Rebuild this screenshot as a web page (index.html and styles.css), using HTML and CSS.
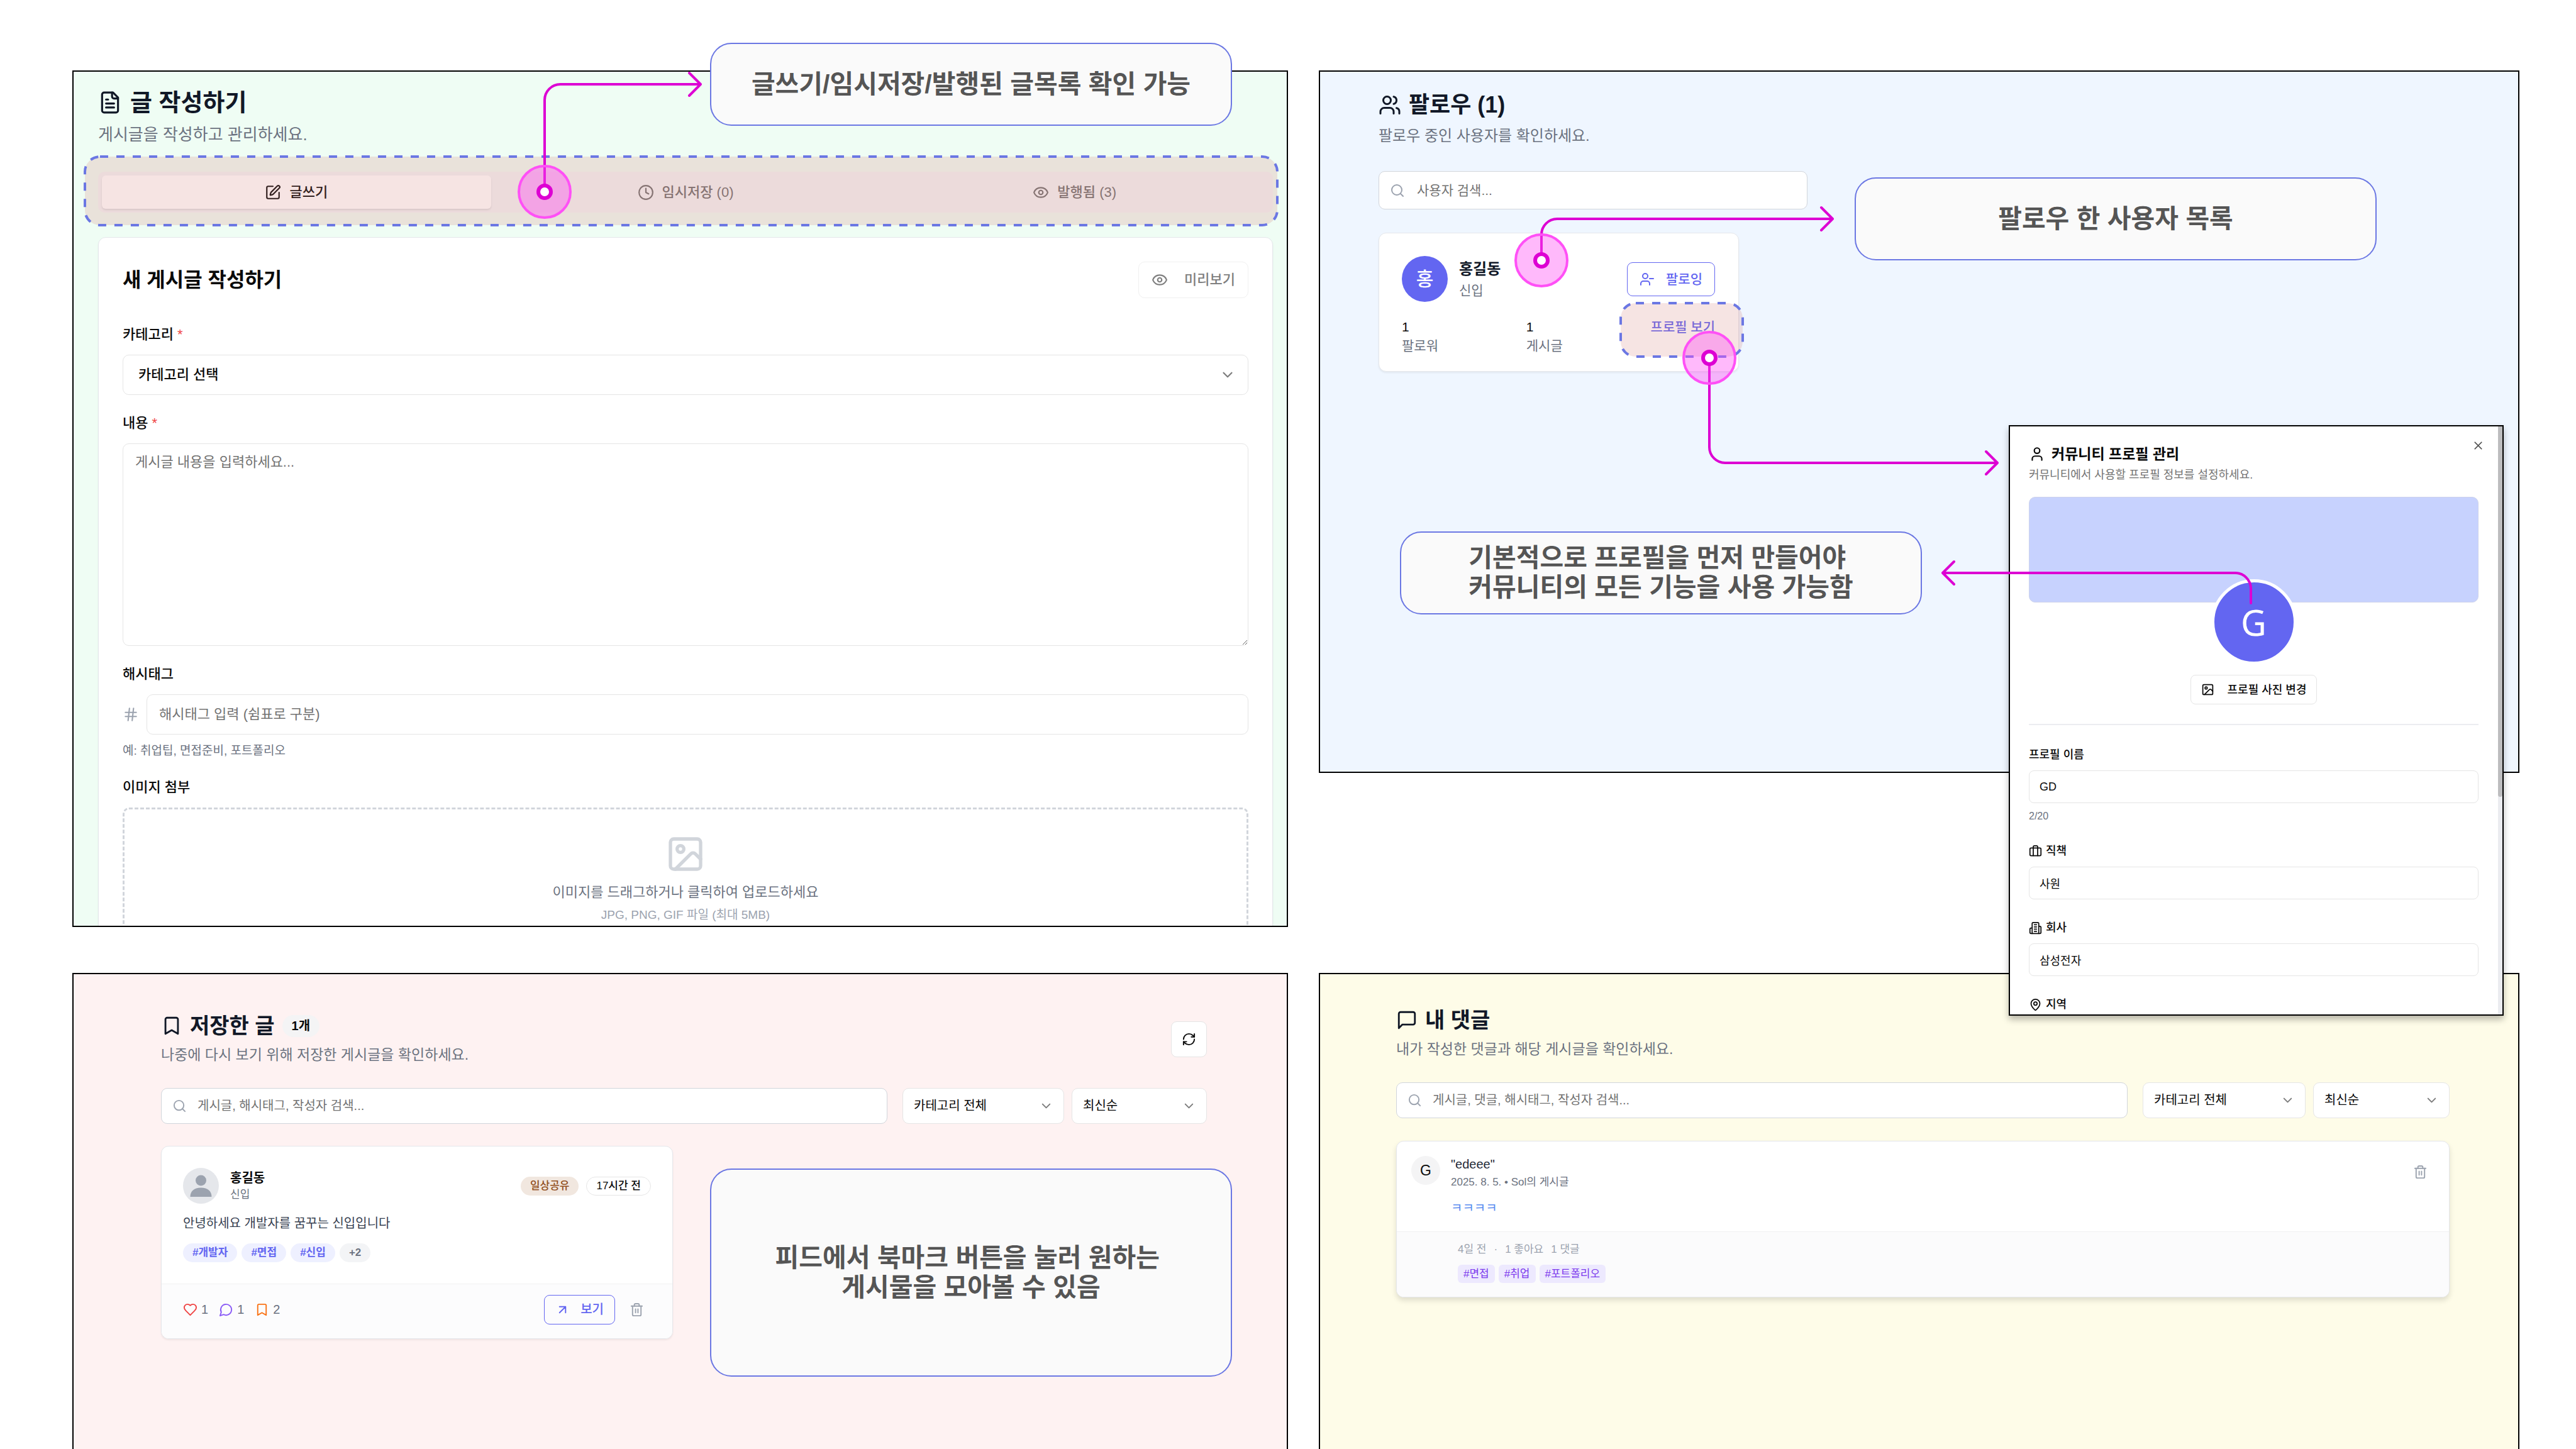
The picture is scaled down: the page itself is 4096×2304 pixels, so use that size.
FILE: index.html
```html
<!DOCTYPE html>
<html lang="ko">
<head>
<meta charset="utf-8">
<meta name="viewport" content="width=device-width, initial-scale=1">
<title>커뮤니티 화면 안내</title>
<link rel="stylesheet" href="styles.css">
</head>
<body>
<svg class="sprite" aria-hidden="true">
  <symbol id="i-file" viewBox="0 0 24 24"><path d="M15 2H6a2 2 0 0 0-2 2v16a2 2 0 0 0 2 2h12a2 2 0 0 0 2-2V7Z"/><path d="M14 2v4a2 2 0 0 0 2 2h4"/><path d="M10 9H8"/><path d="M16 13H8"/><path d="M16 17H8"/></symbol>
  <symbol id="i-edit" viewBox="0 0 24 24"><path d="M12 3H5a2 2 0 0 0-2 2v14a2 2 0 0 0 2 2h14a2 2 0 0 0 2-2v-7"/><path d="M18.375 2.625a1 1 0 0 1 3 3l-9.013 9.014a2 2 0 0 1-.853.505l-2.873.84a.5.5 0 0 1-.62-.62l.84-2.873a2 2 0 0 1 .506-.852z"/></symbol>
  <symbol id="i-clock" viewBox="0 0 24 24"><circle cx="12" cy="12" r="10"/><path d="M12 6v6l4 2"/></symbol>
  <symbol id="i-eye" viewBox="0 0 24 24"><path d="M2.062 12.348a1 1 0 0 1 0-.696 10.75 10.75 0 0 1 19.876 0 1 1 0 0 1 0 .696 10.75 10.75 0 0 1-19.876 0"/><circle cx="12" cy="12" r="3"/></symbol>
  <symbol id="i-chevron" viewBox="0 0 24 24"><path d="m6 9 6 6 6-6"/></symbol>
  <symbol id="i-hash" viewBox="0 0 24 24"><path d="M4 9h16M4 15h16M10 3 8 21M16 3l-2 18"/></symbol>
  <symbol id="i-image" viewBox="0 0 24 24"><rect x="3" y="3" width="18" height="18" rx="2"/><circle cx="9" cy="9" r="2"/><path d="m21 15-3.086-3.086a2 2 0 0 0-2.828 0L6 21"/></symbol>
  <symbol id="i-users" viewBox="0 0 24 24"><path d="M16 21v-2a4 4 0 0 0-4-4H6a4 4 0 0 0-4 4v2"/><circle cx="9" cy="7" r="4"/><path d="M22 21v-2a4 4 0 0 0-3-3.87"/><path d="M16 3.13a4 4 0 0 1 0 7.75"/></symbol>
  <symbol id="i-user-minus" viewBox="0 0 24 24"><path d="M16 21v-2a4 4 0 0 0-4-4H6a4 4 0 0 0-4 4v2"/><circle cx="9" cy="7" r="4"/><path d="M22 11h-6"/></symbol>
  <symbol id="i-user" viewBox="0 0 24 24"><path d="M19 21v-2a4 4 0 0 0-4-4H9a4 4 0 0 0-4 4v2"/><circle cx="12" cy="7" r="4"/></symbol>
  <symbol id="i-search" viewBox="0 0 24 24"><circle cx="11" cy="11" r="8"/><path d="m21 21-4.3-4.3"/></symbol>
  <symbol id="i-x" viewBox="0 0 24 24"><path d="M18 6 6 18M6 6l12 12"/></symbol>
  <symbol id="i-briefcase" viewBox="0 0 24 24"><path d="M16 20V4a2 2 0 0 0-2-2h-4a2 2 0 0 0-2 2v16"/><rect x="2" y="6" width="20" height="14" rx="2"/></symbol>
  <symbol id="i-building" viewBox="0 0 24 24"><path d="M6 22V4a2 2 0 0 1 2-2h8a2 2 0 0 1 2 2v18Z"/><path d="M6 12H4a2 2 0 0 0-2 2v6a2 2 0 0 0 2 2h2"/><path d="M18 9h2a2 2 0 0 1 2 2v9a2 2 0 0 1-2 2h-2"/><path d="M10 6h4M10 10h4M10 14h4M10 18h4"/></symbol>
  <symbol id="i-pin" viewBox="0 0 24 24"><path d="M20 10c0 4.993-5.539 10.193-7.399 11.799a1 1 0 0 1-1.202 0C9.539 20.193 4 14.993 4 10a8 8 0 0 1 16 0"/><circle cx="12" cy="10" r="3"/></symbol>
  <symbol id="i-bookmark" viewBox="0 0 24 24"><path d="m19 21-7-4-7 4V5a2 2 0 0 1 2-2h10a2 2 0 0 1 2 2v16z"/></symbol>
  <symbol id="i-refresh" viewBox="0 0 24 24"><path d="M3 12a9 9 0 0 1 9-9 9.75 9.75 0 0 1 6.74 2.74L21 8"/><path d="M21 3v5h-5"/><path d="M21 12a9 9 0 0 1-9 9 9.75 9.75 0 0 1-6.74-2.74L3 16"/><path d="M8 16H3v5"/></symbol>
  <symbol id="i-heart" viewBox="0 0 24 24"><path d="M19 14c1.49-1.46 3-3.21 3-5.5A5.5 5.5 0 0 0 16.5 3c-1.76 0-3 .5-4.5 2-1.5-1.5-2.74-2-4.5-2A5.5 5.5 0 0 0 2 8.5c0 2.3 1.5 4.05 3 5.5l7 7Z"/></symbol>
  <symbol id="i-comment" viewBox="0 0 24 24"><path d="M7.9 20A9 9 0 1 0 4 16.1L2 22Z"/></symbol>
  <symbol id="i-message" viewBox="0 0 24 24"><path d="M21 15a2 2 0 0 1-2 2H7l-4 4V5a2 2 0 0 1 2-2h14a2 2 0 0 1 2 2z"/></symbol>
  <symbol id="i-arrow" viewBox="0 0 24 24"><path d="M7 7h10v10M7 17 17 7"/></symbol>
  <symbol id="i-trash" viewBox="0 0 24 24"><path d="M3 6h18"/><path d="M19 6v14a2 2 0 0 1-2 2H7a2 2 0 0 1-2-2V6"/><path d="M8 6V4a2 2 0 0 1 2-2h4a2 2 0 0 1 2 2v2"/><path d="M10 11v6M14 11v6"/></symbol>
</svg>

<main class="board">

  <!-- Write a post -->
  <section class="frame">
    <div class="screen screen-write">
      <header class="page-head">
        <h1 class="page-title"><svg class="icon"><use href="#i-file"/></svg>글 작성하기</h1>
        <p class="page-sub">게시글을 작성하고 관리하세요.</p>
      </header>
      <nav class="tabs">
        <button class="tab tab-active" type="button"><svg class="icon"><use href="#i-edit"/></svg>글쓰기</button>
        <button class="tab" type="button"><svg class="icon"><use href="#i-clock"/></svg>임시저장 (0)</button>
        <button class="tab" type="button"><svg class="icon"><use href="#i-eye"/></svg>발행됨 (3)</button>
      </nav>
      <form class="card write-card">
        <div class="write-head">
          <h2 class="write-title">새 게시글 작성하기</h2>
          <button class="preview" type="button"><svg class="icon"><use href="#i-eye"/></svg>미리보기</button>
        </div>
        <div class="field">
          <label for="category">카테고리 <span class="required">*</span></label>
          <div class="select-wrap">
            <select id="category"><option>카테고리 선택</option></select>
            <svg class="icon"><use href="#i-chevron"/></svg>
          </div>
        </div>
        <div class="field">
          <label for="content">내용 <span class="required">*</span></label>
          <textarea id="content" placeholder="게시글 내용을 입력하세요..."></textarea>
        </div>
        <div class="field">
          <label for="hashtags">해시태그</label>
          <div class="hash-row">
            <svg class="icon"><use href="#i-hash"/></svg>
            <input id="hashtags" type="text" placeholder="해시태그 입력 (쉼표로 구분)">
          </div>
          <p class="hint">예: 취업팁, 면접준비, 포트폴리오</p>
        </div>
        <div class="field">
          <span class="field-name">이미지 첨부</span>
          <div class="dropzone">
            <svg class="icon"><use href="#i-image"/></svg>
            <p class="drop-main">이미지를 드래그하거나 클릭하여 업로드하세요</p>
            <p class="drop-sub">JPG, PNG, GIF 파일 (최대 5MB)</p>
          </div>
        </div>
      </form>
    </div>
    <svg class="highlight highlight-tabs"><rect/></svg>
    <p class="callout callout-write">글쓰기/임시저장/발행된 글목록 확인 가능</p>
    <svg class="connectors">
      <path class="wire" d="M751 193V47a25 25 0 0 1 25-25H999M981 4l18 18-18 18"/>
      <circle class="halo" cx="751" cy="193" r="41"/>
      <circle class="dot" cx="751" cy="193" r="10"/>
    </svg>
  </section>

  <!-- Following -->
  <section class="frame frame-follow">
    <div class="screen screen-follow">
      <header class="page-head">
        <h1 class="page-title"><svg class="icon"><use href="#i-users"/></svg>팔로우 (1)</h1>
        <p class="page-sub">팔로우 중인 사용자를 확인하세요.</p>
      </header>
      <div class="search">
        <svg class="icon"><use href="#i-search"/></svg>
        <input type="search" aria-label="사용자 검색" placeholder="사용자 검색...">
      </div>
      <article class="card user-card">
        <div class="user-top">
          <span class="user-avatar">홍</span>
          <div class="user-id">
            <h2 class="user-name">홍길동</h2>
            <p class="user-role">신입</p>
          </div>
          <button class="follow" type="button"><svg class="icon"><use href="#i-user-minus"/></svg>팔로잉</button>
        </div>
        <div class="user-stats">
          <p><strong>1</strong>팔로워</p>
          <p><strong>1</strong>게시글</p>
          <a class="profile-link" href="#profile">프로필 보기</a>
        </div>
      </article>
    </div>

    <div class="modal" id="profile" role="dialog" aria-labelledby="modal-title">
      <div class="modal-body">
        <h2 class="modal-title" id="modal-title"><svg class="icon"><use href="#i-user"/></svg>커뮤니티 프로필 관리</h2>
        <p class="modal-sub">커뮤니티에서 사용할 프로필 정보를 설정하세요.</p>
        <div class="banner"></div>
        <div class="photo">
          <span class="photo-avatar">G</span>
          <button class="photo-button" type="button"><svg class="icon"><use href="#i-image"/></svg>프로필 사진 변경</button>
        </div>
        <hr class="rule">
        <div class="modal-field">
          <label for="p-name">프로필 이름</label>
          <input id="p-name" type="text" value="GD">
          <p class="count">2/20</p>
        </div>
        <div class="modal-field">
          <label for="p-job"><svg class="icon"><use href="#i-briefcase"/></svg>직책</label>
          <input id="p-job" type="text" value="사원">
        </div>
        <div class="modal-field">
          <label for="p-company"><svg class="icon"><use href="#i-building"/></svg>회사</label>
          <input id="p-company" type="text" value="삼성전자">
        </div>
        <div class="modal-field">
          <label for="p-region"><svg class="icon"><use href="#i-pin"/></svg>지역</label>
          <input id="p-region" type="text">
        </div>
      </div>
      <div class="scrollbar"><div class="thumb"></div></div>
      <button class="close" type="button" aria-label="닫기"><svg class="icon"><use href="#i-x"/></svg></button>
    </div>

    <svg class="highlight highlight-profile"><rect/></svg>
    <p class="callout callout-follow">팔로우 한 사용자 목록</p>
    <p class="callout callout-profile">기본적으로 프로필을 먼저 만들어야&nbsp;<br>커뮤니티의 모든 기능을 사용 가능함</p>
    <svg class="connectors">
      <path class="wire" d="M354 302V261a25 25 0 0 1 25-25H817M799 218l18 18-18 18"/>
      <path class="wire" d="M621 457V599a25 25 0 0 0 25 25H1079M1061 606l18 18-18 18"/>
      <path class="wire" d="M1482 847V824a25 25 0 0 0-25-25H992M1010 781l-18 18 18 18"/>
      <circle class="halo" cx="354" cy="302" r="41"/>
      <circle class="dot" cx="354" cy="302" r="10"/>
      <circle class="halo" cx="621" cy="457" r="41"/>
      <circle class="dot" cx="621" cy="457" r="10"/>
    </svg>
  </section>

  <!-- Saved posts -->
  <section class="frame">
    <div class="screen screen-saved">
      <header class="saved-head">
        <div class="page-head">
          <h1 class="page-title"><svg class="icon"><use href="#i-bookmark"/></svg>저장한 글<span class="total">1개</span></h1>
          <p class="page-sub">나중에 다시 보기 위해 저장한 게시글을 확인하세요.</p>
        </div>
        <button class="refresh" type="button" aria-label="새로고침"><svg class="icon"><use href="#i-refresh"/></svg></button>
      </header>
      <div class="toolbar">
        <div class="search">
          <svg class="icon"><use href="#i-search"/></svg>
          <input type="search" aria-label="저장한 글 검색" placeholder="게시글, 해시태그, 작성자 검색...">
        </div>
        <div class="filters">
          <div class="select-wrap filter-category">
            <select aria-label="카테고리"><option>카테고리 전체</option></select>
            <svg class="icon"><use href="#i-chevron"/></svg>
          </div>
          <div class="select-wrap filter-sort">
            <select aria-label="정렬"><option>최신순</option></select>
            <svg class="icon"><use href="#i-chevron"/></svg>
          </div>
        </div>
      </div>
      <article class="card post-card">
        <div class="post-main">
          <div class="post-top">
            <svg class="post-avatar" viewBox="0 0 57 57" aria-hidden="true"><circle cx="28.500" cy="28.500" r="28.500" fill="#e5e7eb"/><circle cx="28.500" cy="20" r="8.500" fill="#9ca3af"/><path d="M11.500 46c0-9 6-14.500 17-14.500S45.500 37 45.500 46z" fill="#9ca3af"/></svg>
            <div class="post-id">
              <h2 class="post-name">홍길동</h2>
              <p class="post-role">신입</p>
            </div>
            <span class="pill pill-category">일상공유</span>
            <span class="pill pill-time">17시간 전</span>
          </div>
          <p class="post-text">안녕하세요 개발자를 꿈꾸는 신입입니다</p>
          <div class="post-tags">
            <span class="pill pill-tag">#개발자</span>
            <span class="pill pill-tag">#면접</span>
            <span class="pill pill-tag">#신입</span>
            <span class="pill pill-more">+2</span>
          </div>
        </div>
        <footer class="post-foot">
          <span class="metric metric-like"><svg class="icon"><use href="#i-heart"/></svg>1</span>
          <span class="metric metric-comment"><svg class="icon"><use href="#i-comment"/></svg>1</span>
          <span class="metric metric-save"><svg class="icon"><use href="#i-bookmark"/></svg>2</span>
          <button class="view" type="button"><svg class="icon"><use href="#i-arrow"/></svg>보기</button>
          <button class="trash" type="button" aria-label="삭제"><svg class="icon"><use href="#i-trash"/></svg></button>
        </footer>
      </article>
    </div>
    <p class="callout callout-saved">피드에서 북마크 버튼을 눌러 원하는&nbsp;<br>게시물을 모아볼 수 있음</p>
  </section>

  <!-- My comments -->
  <section class="frame">
    <div class="screen screen-comments">
      <header class="page-head">
        <h1 class="page-title"><svg class="icon"><use href="#i-message"/></svg>내 댓글</h1>
        <p class="page-sub">내가 작성한 댓글과 해당 게시글을 확인하세요.</p>
      </header>
      <div class="toolbar">
        <div class="search">
          <svg class="icon"><use href="#i-search"/></svg>
          <input type="search" aria-label="댓글 검색" placeholder="게시글, 댓글, 해시태그, 작성자 검색...">
        </div>
        <div class="filters">
          <div class="select-wrap filter-category">
            <select aria-label="카테고리"><option>카테고리 전체</option></select>
            <svg class="icon"><use href="#i-chevron"/></svg>
          </div>
          <div class="select-wrap filter-sort">
            <select aria-label="정렬"><option>최신순</option></select>
            <svg class="icon"><use href="#i-chevron"/></svg>
          </div>
        </div>
      </div>
      <article class="card comment-card">
        <div class="comment-main">
          <span class="comment-avatar">G</span>
          <div class="comment-body">
            <h2 class="comment-title">"edeee"</h2>
            <p class="comment-meta">2025. 8. 5. • Sol의 게시글</p>
            <p class="comment-text">ㅋㅋㅋㅋ</p>
          </div>
          <button class="trash" type="button" aria-label="삭제"><svg class="icon"><use href="#i-trash"/></svg></button>
        </div>
        <footer class="comment-foot">
          <p class="comment-info"><span>4일 전</span><span>·</span><span>1 좋아요</span><span>1 댓글</span></p>
          <div class="comment-tags"><span>#면접</span><span>#취업</span><span>#포트폴리오</span></div>
        </footer>
      </article>
    </div>
  </section>
</main>
</body>
</html>
```
FILE: styles.css
```css
* { box-sizing: border-box; }

body {
  margin: 0;
  background: #fff;
  color: #0a0a0a;
  font-family: "Liberation Sans", "Noto Sans CJK KR", sans-serif;
}

h1, h2, p { margin: 0; }

button, input, select, textarea {
  font: inherit;
  color: inherit;
}

button {
  display: inline-flex;
  align-items: center;
  justify-content: center;
  margin: 0;
  padding: 0;
  border: 0;
  background: none;
  white-space: nowrap;
}

input, select, textarea {
  display: block;
  width: 100%;
  margin: 0;
  border: 1px solid #e5e5e5;
  border-radius: 10px;
  background: #fff;
  appearance: none;
}

input::placeholder, textarea::placeholder {
  color: #737373;
  opacity: 1;
}

.sprite { display: none; }

.icon {
  display: block;
  flex: none;
  fill: none;
  stroke: currentColor;
  stroke-width: 2;
  stroke-linecap: round;
  stroke-linejoin: round;
}

/* Board of four screens */
.board {
  display: grid;
  grid-template-columns: 1933fr 1909fr;
  grid-template-rows: auto 1fr;
  column-gap: 49px;
  row-gap: 73px;
  min-height: 100vh;
  padding: 112px 90px 0 115px;
}

.frame {
  position: relative;
  display: flex;
  flex-direction: column;
  min-width: 0;
}

.frame-follow {
  z-index: 1;
  align-self: start;
}

.screen {
  flex: 1;
  overflow: hidden;
  border: 2px solid #000;
}

.card {
  border: 1px solid #e5e7eb;
  border-radius: 12px;
  background: #fff;
  box-shadow: 0 2px 3px rgba(0, 0, 0, .06);
  overflow: hidden;
}

.page-title {
  display: flex;
  align-items: center;
  gap: 12px;
  color: #111827;
  font-weight: 700;
}

.page-sub { color: #6b7280; }

.search, .select-wrap {
  display: grid;
  align-items: center;
}

.search > *, .select-wrap > * { grid-area: 1 / 1; }

.search .icon {
  z-index: 1;
  margin-left: 18px;
  color: #9ca3af;
}

.search input { border-color: #d1d5db; }

.select-wrap .icon {
  justify-self: end;
  margin-right: 17px;
  color: #7c7c7c;
}

/* Write screen */
.screen-write {
  max-height: 1362px;
  padding: 27px 22px 0 39px;
  background: #effdf4;
  font-size: 22px;
  line-height: 32px;
}

.screen-write .icon { width: 26px; height: 26px; }
.screen-write .page-title { gap: 13px; font-size: 38px; line-height: 44px; }
.screen-write .page-title .icon { width: 38px; height: 38px; }
.screen-write .page-sub { margin-top: 10px; font-size: 26px; line-height: 38px; }

.tabs {
  display: grid;
  grid-template-columns: repeat(3, 1fr);
  margin-top: 40px;
  padding: 6px;
  border-radius: 10px;
  background: #f3f4f6;
}

.tab {
  gap: 13px;
  height: 53px;
  border-radius: 6px;
  color: #737373;
  font-weight: 500;
}

.tab-active {
  background: #fff;
  color: #0a0a0a;
  box-shadow: 0 2px 3px rgba(0, 0, 0, .1);
}

.write-card {
  margin-top: 39px;
  padding: 38px;
}

.write-head {
  display: flex;
  align-items: center;
  justify-content: space-between;
  margin-bottom: 42px;
}

.write-title { font-size: 32px; line-height: 38px; font-weight: 700; }

.preview {
  gap: 26px;
  height: 58px;
  padding: 0 20px;
  border: 1px solid #f0f0f0;
  border-radius: 10px;
  color: #7f7f7f;
  font-weight: 500;
}

.field + .field { margin-top: 29px; }

.field label, .field-name {
  display: block;
  margin-bottom: 16px;
  font-weight: 500;
}

.required { color: #ef4444; }

.field select, .field input { height: 64px; padding: 0 19px; }
.field select { padding: 0 24px; font-weight: 500; }
.field .select-wrap .icon { margin-right: 20px; }

.field textarea {
  height: 322px;
  padding: 13px 19px;
  line-height: 32px;
  resize: vertical;
}

.hash-row {
  display: flex;
  align-items: center;
  gap: 12px;
}

.hash-row .icon { color: #9ca3af; }

.hint {
  margin-top: 13px;
  color: #6b7280;
  font-size: 19px;
  line-height: 26px;
}

.dropzone {
  display: flex;
  flex-direction: column;
  align-items: center;
  padding: 39px;
  border: 3px dashed #d1d5db;
  border-radius: 10px;
}

.dropzone .icon { width: 64px; height: 64px; color: #d1d5db; }
.drop-main { margin-top: 13px; color: #6b7280; }
.drop-sub { margin-top: 7px; color: #9ca3af; font-size: 19px; line-height: 26px; }

/* Following screen */
.screen-follow {
  min-height: 1117px;
  padding: 31px 93px;
  background: #eff6ff;
  font-size: 21px;
  line-height: 30px;
}

.screen-follow .icon { width: 24px; height: 24px; }
.screen-follow .page-title { font-size: 36px; line-height: 44px; }
.screen-follow .page-title .icon { width: 36px; height: 36px; }
.screen-follow .page-sub { margin-top: 9px; font-size: 24px; line-height: 36px; }

.screen-follow .search { max-width: 682px; margin-top: 38px; }
.screen-follow .search input { height: 61px; padding: 0 18px 0 60px; }

.user-card {
  max-width: 573px;
  margin-top: 37px;
  padding: 36px 37px 25px 36px;
}

.user-top {
  display: flex;
  align-items: center;
  gap: 18px;
}

.user-avatar {
  display: grid;
  place-items: center;
  width: 73px;
  height: 73px;
  border-radius: 50%;
  background: #6366f1;
  color: #fff;
  font-size: 30px;
  font-weight: 500;
}

.user-id { flex: 1; }
.user-name { color: #111827; font-size: 24px; line-height: 36px; }
.user-role { color: #6b7280; line-height: 32px; }

.follow {
  gap: 18px;
  height: 54px;
  padding: 0 19px;
  border: 1px solid #6366f1;
  border-radius: 9px;
  color: #6366f1;
  font-weight: 500;
}

.user-stats {
  display: grid;
  grid-template-columns: 1fr 1fr auto;
  margin-top: 25px;
  color: #6b7280;
}

.user-stats strong { display: block; color: #0a0a0a; font-weight: 500; }

.profile-link {
  color: #6366f1;
  font-weight: 500;
  text-decoration: none;
}

/* Profile dialog */
.modal {
  position: absolute;
  top: 564px;
  left: 1097px;
  display: flex;
  width: 787px;
  height: 939px;
  border: 2px solid #000;
  background: #fff;
  box-shadow: 0 6px 10px rgba(0, 0, 0, .28);
  overflow: hidden;
  font-size: 18px;
  line-height: 26px;
}

.modal .icon { width: 21px; height: 21px; }
.modal-body { flex: 1; padding: 29px 31px 0 30px; }

.modal-title {
  display: flex;
  align-items: center;
  gap: 10px;
  font-size: 23px;
  line-height: 30px;
  font-weight: 700;
}

.modal-title .icon { width: 26px; height: 26px; }
.modal-sub { margin-top: 5px; color: #737373; }

.banner {
  height: 168px;
  margin-top: 22px;
  border: 1px solid #cdd3ec;
  border-radius: 10px;
  background: #c7d2fe;
}

.photo {
  display: flex;
  flex-direction: column;
  align-items: center;
  gap: 16px;
  margin-top: -37px;
}

.photo-avatar {
  display: grid;
  place-items: center;
  width: 136px;
  height: 136px;
  border: 5px solid #fff;
  border-radius: 50%;
  background: #6366f1;
  color: #fff;
  font-family: "Noto Sans", sans-serif;
  font-size: 56px;
  line-height: 56px;
}

.photo-button {
  gap: 21px;
  height: 47px;
  padding: 0 16px;
  border: 1px solid #e5e5e5;
  border-radius: 8px;
  font-weight: 500;
}

.rule {
  height: 2px;
  margin: 31px 0 34px;
  border: 0;
  background: #ebecf0;
}

.modal-field + .modal-field { margin-top: 32px; }

.modal-field label {
  display: flex;
  align-items: center;
  gap: 6px;
  margin-bottom: 12px;
  font-weight: 500;
}

.modal-field input { height: 52px; padding: 0 16px; border-radius: 8px; }
.count { margin-top: 10px; color: #6b7280; font-size: 16px; line-height: 21px; }

.scrollbar { width: 7px; background: #ebecf0; }
.thumb { height: 63%; border-radius: 0 0 4px 4px; background: #bdbdbf; }

.close {
  position: absolute;
  top: 20px;
  right: 28px;
  color: #4b4b4b;
}

/* Saved posts and comments */
.screen-saved, .screen-comments {
  border-bottom: 0;
  font-size: 20px;
  line-height: 29px;
}

.screen-saved { padding: 62px 127px 0 139px; background: #fef2f2; }
.screen-comments { padding: 53px 109px 0 121px; background: #fefce8; }

.screen-saved .icon, .screen-comments .icon { width: 23px; height: 23px; }
.screen-saved .page-title, .screen-comments .page-title { font-size: 34px; line-height: 40px; }
.screen-saved .page-title .icon, .screen-comments .page-title .icon { width: 34px; height: 34px; }
.screen-saved .page-sub, .screen-comments .page-sub { margin-top: 9px; font-size: 23px; line-height: 34px; }

.saved-head {
  display: flex;
  align-items: center;
  justify-content: space-between;
}

.total {
  padding: 0 15px;
  border-radius: 18px;
  background: #f4f4f5;
  color: #0a0a0a;
  font-size: 20px;
  line-height: 35px;
  font-weight: 700;
}

.refresh {
  width: 57px;
  height: 57px;
  border: 1px solid #e5e5e5;
  border-radius: 9px;
  background: #fff;
}

.toolbar {
  display: flex;
  gap: 24px;
  margin-top: 36px;
}

.toolbar .search { flex: 1; }
.toolbar .search input { height: 57px; padding: 0 17px 0 57px; }
.filters { display: flex; gap: 12px; }
.filters select { height: 57px; padding: 0 17px; }
.filter-category { width: 257px; }
.filter-sort { width: 215px; }
.screen-comments .filter-category { width: 259px; }
.screen-comments .filter-sort { width: 217px; }

.post-card {
  max-width: 814px;
  margin-top: 35px;
}

.post-main { padding: 34px; }

.post-top {
  display: flex;
  align-items: center;
  gap: 12px;
}

.post-avatar { width: 57px; height: 57px; }
.post-id { flex: 1; padding-left: 6px; }
.post-name { font-size: 20px; line-height: 29px; }
.post-role { color: #6b7280; font-size: 17px; line-height: 24px; }

.pill {
  padding: 0 14px;
  border: 1px solid transparent;
  border-radius: 15px;
  font-size: 17px;
  line-height: 28px;
  font-weight: 500;
}

.pill-category { background: #f1e7df; color: #92501f; }
.pill-time { padding: 0 15px; border-color: #e5e5e5; }
.pill-tag { background: #eef0ff; color: #6366f1; font-weight: 700; }
.pill-more { background: #f3f4f6; color: #6b7280; font-weight: 700; }

.post-text { margin-top: 15px; color: #374151; line-height: 32px; }

.post-tags {
  display: flex;
  gap: 7px;
  margin-top: 16px;
}

.post-foot {
  display: flex;
  align-items: center;
  gap: 17px;
  padding: 17px 0 22px 34px;
  border-top: 1px solid #f0f0f2;
  background: #fcfcfd;
  color: #6b7280;
}

.metric {
  display: flex;
  align-items: center;
  gap: 6px;
}

.metric-like .icon { color: #ef4444; }
.metric-comment .icon { color: #8b5cf6; }
.metric-save .icon { color: #f97316; }

.view {
  gap: 17px;
  height: 47px;
  margin-left: auto;
  padding: 0 17px;
  border: 1px solid #6366f1;
  border-radius: 9px;
  color: #6366f1;
  font-weight: 500;
}

.trash { width: 46px; height: 46px; color: #9ca3af; }
.post-foot .trash { margin: 0 34px 0 -6px; }

.comment-card {
  margin-top: 36px;
  box-shadow: 0 5px 9px rgba(0, 0, 0, .12);
}

.comment-main {
  display: flex;
  align-items: flex-start;
  gap: 17px;
  padding: 23px 23px 22px;
}

.comment-avatar {
  display: grid;
  place-items: center;
  width: 46px;
  height: 46px;
  border-radius: 50%;
  background: #f4f4f5;
  font-size: 23px;
}

.comment-body { flex: 1; }
.comment-title { color: #1f2937; font-size: 20px; line-height: 26px; font-weight: 500; }
.comment-meta { margin-top: 4px; color: #6b7280; font-size: 17px; line-height: 24px; }
.comment-text { margin-top: 15px; color: #5b8def; }
.comment-main .trash { height: 50px; }

.comment-foot {
  padding: 16px 23px 22px 97px;
  border-top: 1px solid #f0f0f2;
  background: #fbfbfc;
  font-size: 17px;
  line-height: 24px;
}

.comment-info { display: flex; gap: 12px; color: #9ca3af; }

.comment-tags {
  display: flex;
  gap: 6px;
  margin-top: 12px;
  color: #7c3aed;
  line-height: 29px;
}

.comment-tags span { padding: 0 9px; border-radius: 6px; background: #ede9fe; }

/* Annotations laid over the screens */
.callout {
  position: absolute;
  display: grid;
  place-content: center;
  width: 830px;
  height: 132px;
  border: 2px solid #6b77e3;
  border-radius: 34px;
  background: #fafafa;
  color: #555;
  font-size: 41px;
  line-height: 47px;
  font-weight: 700;
  text-align: center;
  white-space: nowrap;
}

.callout-write { top: -44px; left: 1014px; }
.callout-follow { top: 170px; left: 852px; }
.callout-profile { top: 733px; left: 129px; }
.callout-saved { top: 311px; left: 1014px; height: 331px; }

.highlight { position: absolute; overflow: visible; }

.highlight rect {
  x: 2px;
  y: 2px;
  width: calc(100% - 4px);
  height: calc(100% - 4px);
  rx: 24px;
  fill: rgba(210, 120, 115, .2);
  stroke: #6b77e3;
  stroke-width: 4px;
  stroke-dasharray: 13 13;
}

.highlight-tabs {
  top: 135px;
  left: 18px;
  width: calc(100% - 33px);
  height: 113px;
}

.highlight-profile {
  top: 368px;
  left: 478px;
  width: 198px;
  height: 89px;
}

.connectors {
  position: absolute;
  top: 0;
  left: 0;
  width: 100%;
  height: 100%;
  overflow: visible;
  pointer-events: none;
}

.wire {
  fill: none;
  stroke: #dd00d3;
  stroke-width: 4px;
  stroke-linecap: round;
  stroke-linejoin: round;
}

.halo {
  fill: rgba(255, 80, 246, .4);
  stroke: #ff50f6;
  stroke-width: 4px;
}

.dot {
  fill: #fff;
  stroke: #dd00d3;
  stroke-width: 6px;
}
```
